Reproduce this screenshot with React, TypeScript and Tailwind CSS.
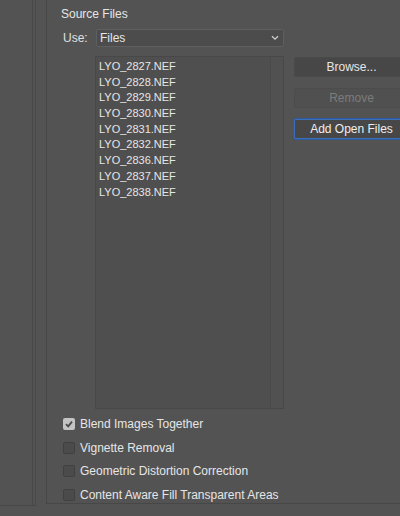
import { useState } from 'react'

const files = [
  'LYO_2827.NEF',
  'LYO_2828.NEF',
  'LYO_2829.NEF',
  'LYO_2830.NEF',
  'LYO_2831.NEF',
  'LYO_2832.NEF',
  'LYO_2836.NEF',
  'LYO_2837.NEF',
  'LYO_2838.NEF',
]

const options = [
  { label: 'Blend Images Together', checked: true },
  { label: 'Vignette Removal', checked: false },
  { label: 'Geometric Distortion Correction', checked: false },
  { label: 'Content Aware Fill Transparent Areas', checked: false },
]

function Checkbox({ label, checked, onToggle }: { label: string; checked: boolean; onToggle: () => void }) {
  return (
    <label className="flex h-[23.7px] items-center gap-[5px] cursor-default" onClick={onToggle}>
      <span
        className={
          checked
            ? 'flex h-[12px] w-[12px] items-center justify-center rounded-[2px] bg-[#c4c4c4]'
            : 'flex h-[12px] w-[12px] items-center justify-center rounded-[2px] border border-[#404040] bg-[#4b4b4b]'
        }
      >
        {checked && (
          <svg width="10" height="10" viewBox="0 0 10 10">
            <path d="M2 5.2 L4.2 7.3 L8 2.6" stroke="#4a4a4a" strokeWidth="1.8" fill="none" />
          </svg>
        )}
      </span>
      <span className="text-[12px] text-[#e6e6e6]">{label}</span>
    </label>
  )
}

export default function App() {
  const [checks, setChecks] = useState(options.map((o) => o.checked))

  return (
    <div
      className="flex h-[516px] w-[400px] overflow-hidden bg-[#535353]"
      style={{ fontFamily: '"Liberation Sans", Arial, sans-serif' }}
    >
      {/* Left panel edge */}
      <div className="flex h-[506px] w-[36px] shrink-0 border-b border-[#474747]">
        <div className="w-[33px] border-r border-[#474747]" />
        <div className="w-[3px] border-r border-[#4a4a4a]" />
      </div>

      {/* Source Files group */}
      <div className="ml-[10px] flex h-[504px] flex-1 flex-col border-b border-l border-[#474747] pl-[14px]">
        <div className="pt-[5px] text-[12px] text-[#e6e6e6]">Source Files</div>

        <div className="mt-[6px] flex items-center">
          <span className="w-[35px] pl-[2px] text-[12px] text-[#e0e0e0]">Use:</span>
          <div className="flex h-[18px] w-[188px] items-center justify-between rounded-[2px] border border-[#5f5f5f] bg-[#4c4c4c] pl-[3px] pr-[4px]">
            <span className="text-[12px] text-[#e6e6e6]">Files</span>
            <svg width="8" height="6" viewBox="0 0 8 6">
              <path d="M1 1.2 L4 4.2 L7 1.2" stroke="#d0d0d0" strokeWidth="1.3" fill="none" />
            </svg>
          </div>
        </div>

        <div className="mt-[9px] flex">
          <div className="ml-[34px] flex h-[353px] w-[189px] shrink-0 border border-[#484848]">
            <div className="flex flex-1 flex-col bg-[#4f4f4f] pl-[3px] pt-[2px]">
              {files.map((f) => (
                <div key={f} className="h-[15.7px] text-[11px] leading-[15.7px] text-[#e6e6e6]">
                  {f}
                </div>
              ))}
            </div>
            <div className="w-[13px] border-l border-[#4a4a4a] bg-[#515151]" />
          </div>

          <div className="ml-[10px] flex flex-col gap-[11px] pt-[1px]">
            <button className="h-[20px] w-[115px] rounded-[2px] border border-[#4a4a4a] bg-[#474747] text-[12px] text-[#e6e6e6]">
              Browse...
            </button>
            <button className="h-[20px] w-[115px] rounded-[2px] border border-[#4c4c4c] bg-[#505050] text-[12px] text-[#7c7c7c]">
              Remove
            </button>
            <button className="h-[20px] w-[115px] rounded-[2px] border border-[#3b6fbd] bg-[#474747] text-[12px] text-[#eeeeee] shadow-[0_0_0_1px_#2f5a9a]">
              Add Open Files
            </button>
          </div>
        </div>

        <div className="mt-[3px] flex flex-col pl-[2px]">
          {options.map((o, i) => (
            <Checkbox
              key={o.label}
              label={o.label}
              checked={checks[i]}
              onToggle={() => setChecks(checks.map((c, j) => (j === i ? !c : c)))}
            />
          ))}
        </div>
      </div>
    </div>
  )
}
